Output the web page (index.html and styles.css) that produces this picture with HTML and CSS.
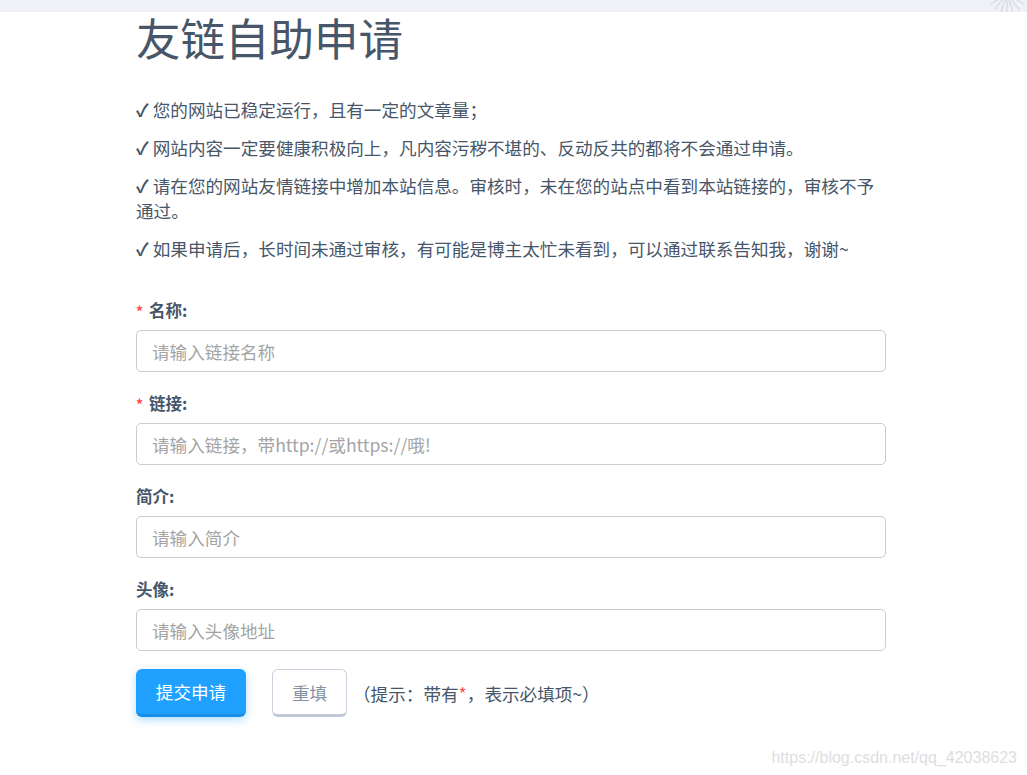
FILE: index.html
```html
<!DOCTYPE html>
<html lang="zh-CN">
<head>
<meta charset="utf-8">
<title>友链自助申请</title>
<link rel="stylesheet" href="styles.css">
</head>
<body>
<div class="topbar">
  <svg class="rays" width="40" height="12" viewBox="0 0 40 12">
    <g stroke="#d9dce3" stroke-width="1.4" stroke-linecap="round">
      <line x1="20" y1="-6" x2="4" y2="4"/>
      <line x1="20" y1="-6" x2="8" y2="9"/>
      <line x1="20" y1="-6" x2="14" y2="12"/>
      <line x1="20" y1="-6" x2="20" y2="12"/>
      <line x1="20" y1="-6" x2="26" y2="12"/>
      <line x1="20" y1="-6" x2="32" y2="9"/>
      <line x1="20" y1="-6" x2="37" y2="4"/>
    </g>
  </svg>
</div>
<main class="page">
  <h1 class="title">友链自助申请</h1>
  <ul class="rules">
    <li>您的网站已稳定运行，且有一定的文章量；</li>
    <li>网站内容一定要健康积极向上，凡内容污秽不堪的、反动反共的都将不会通过申请。</li>
    <li>请在您的网站友情链接中增加本站信息。审核时，未在您的站点中看到本站链接的，审核不予通过。</li>
    <li>如果申请后，长时间未通过审核，有可能是博主太忙未看到，可以通过联系告知我，谢谢~</li>
  </ul>
  <form class="form">
    <div class="field">
      <label class="label"><span class="req">*</span>名称:</label>
      <input class="input" type="text" placeholder="请输入链接名称">
    </div>
    <div class="field">
      <label class="label"><span class="req">*</span>链接:</label>
      <input class="input" type="text" placeholder="请输入链接，带http://或https://哦!">
    </div>
    <div class="field">
      <label class="label">简介:</label>
      <input class="input" type="text" placeholder="请输入简介">
    </div>
    <div class="field">
      <label class="label">头像:</label>
      <input class="input" type="text" placeholder="请输入头像地址">
    </div>
    <div class="actions">
      <button class="btn btn-primary" type="button">提交申请</button>
      <button class="btn btn-default" type="reset">重填</button>
      <span class="hint">（提示：带有<span class="hint-req">*</span>，表示必填项~）</span>
    </div>
  </form>
</main>
<div class="watermark">https://blog.csdn.net/qq_42038623</div>
</body>
</html>
```
FILE: styles.css
```css
html, body {
  margin: 0;
  padding: 0;
  background: #ffffff;
}
body {
  font-family: "Noto Sans CJK SC", "Noto Sans", sans-serif;
  color: #475669;
  position: relative;
  min-height: 775px;
  overflow: hidden;
}
.topbar {
  height: 12px;
  background: #eff1f6;
  position: relative;
}
.rays {
  position: absolute;
  right: 0;
  top: 0;
}
.page {
  width: 750px;
  padding-left: 136px;
}
.title {
  margin: 0;
  font-size: 44.5px;
  font-weight: 400;
  line-height: 50px;
  color: #475669;
}
.rules {
  list-style: none;
  margin: 35px 0 0;
  padding: 0;
  display: flex;
  flex-direction: column;
  gap: 13px;
}
.rules li {
  font-size: 17.6px;
  line-height: 25px;
}
.rules li::before {
  content: "✓ ";
  font-weight: 700;
}
.form {
  margin-top: 37px;
}
.field {
  display: flex;
  flex-direction: column;
  margin-bottom: 19px;
}
.label {
  display: block;
  font-size: 16.5px;
  font-weight: 700;
  line-height: 24px;
  height: 24px;
  margin-bottom: 8px;
  color: #475669;
}
.req {
  color: #ff4949;
  font-size: 14px;
  line-height: 1;
  margin-right: 6px;
}
.input {
  box-sizing: border-box;
  width: 750px;
  height: 42px;
  border: 1px solid #c8ccd3;
  border-radius: 5px;
  padding: 0 15px;
  font-family: "Noto Sans CJK SC", "Noto Sans", sans-serif;
  font-size: 17.6px;
  color: #475669;
  outline: none;
  background: #fff;
}
.input::placeholder {
  color: #a4a4a4;
}
.actions {
  display: flex;
  align-items: center;
  margin-top: -1px;
}
.btn {
  box-sizing: border-box;
  height: 48px;
  border-radius: 6px;
  font-family: "Noto Sans CJK SC", "Noto Sans", sans-serif;
  font-size: 17.6px;
  cursor: pointer;
  padding: 0;
}
.btn-primary {
  width: 110px;
  background: #20a0ff;
  color: #ffffff;
  border: none;
  border-bottom: 3px solid #1a8ee6;
  box-shadow: 0 3px 8px rgba(32, 160, 255, 0.35);
}
.btn-default {
  width: 75px;
  margin-left: 26px;
  background: #ffffff;
  color: #8492a6;
  border: 1px solid #c9d1dd;
  border-bottom: 3px solid #c0c9d6;
}
.hint {
  margin-left: 6px;
  font-size: 17.6px;
  color: #475669;
}
.hint-req {
  color: #ff4949;
}
.watermark {
  position: absolute;
  right: 10px;
  bottom: 8px;
  font-family: "Liberation Sans", Arial, sans-serif;
  font-size: 16px;
  color: #dedede;
}
```
